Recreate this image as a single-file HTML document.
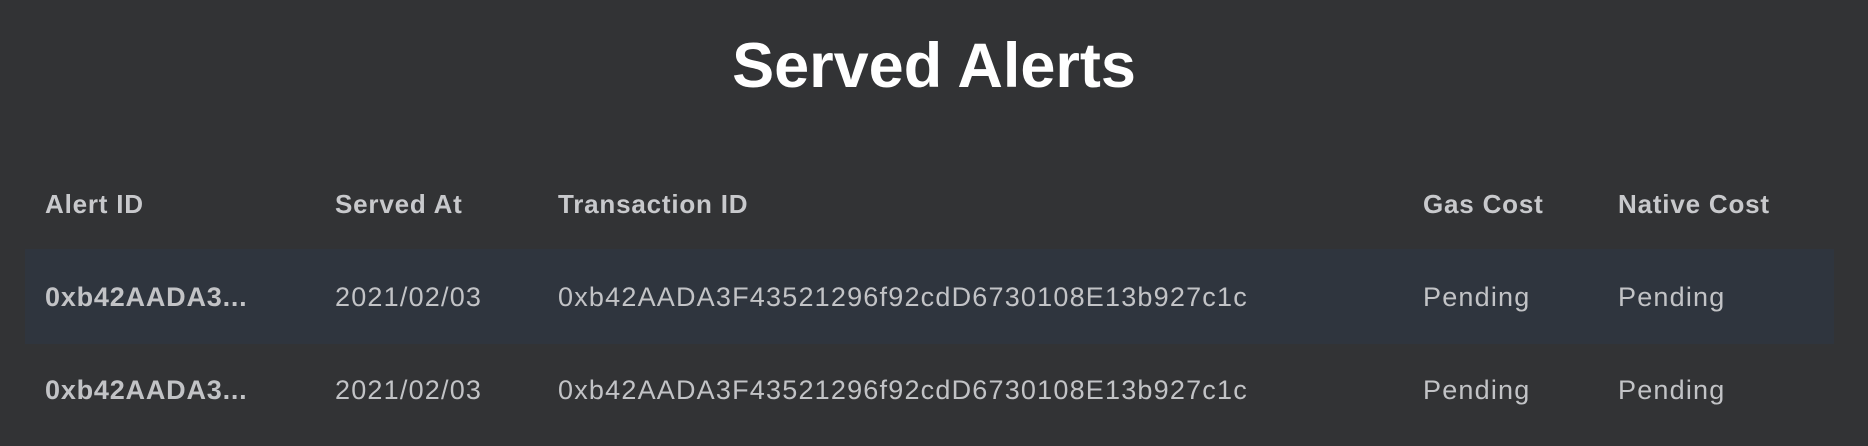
<!DOCTYPE html>
<html><head><meta charset="utf-8"><style>
html,body{margin:0;padding:0;width:1868px;height:446px;background:#323335;overflow:hidden;font-family:"Liberation Sans",Arial,sans-serif}
.t{position:absolute;left:0;width:1868px;text-align:center;top:26px;font-size:63px;font-weight:bold;color:#fff;line-height:80px}
.band{position:absolute;left:25px;top:249px;width:1809px;height:95px;background:#2f353e}
.c{position:absolute;white-space:nowrap;line-height:30px}
.h{font-weight:bold;font-size:26px;color:#c8c9cc;letter-spacing:0.8px;top:189px}
.d{font-size:27px;color:#c2c3c6;letter-spacing:1.2px}
.r1{top:282px}.r2{top:375px}
.b{font-weight:bold;letter-spacing:0.8px}
</style></head><body>
<div class="t">Served Alerts</div>
<div class="band"></div>
<div class="c h" style="left:45px">Alert ID</div>
<div class="c h" style="left:335px">Served At</div>
<div class="c h" style="left:558px">Transaction ID</div>
<div class="c h" style="left:1423px">Gas Cost</div>
<div class="c h" style="left:1618px">Native Cost</div>

<div class="c d b r1" style="left:45px">0xb42AADA3...</div>
<div class="c d r1" style="left:335px">2021/02/03</div>
<div class="c d r1" style="left:558px">0xb42AADA3F43521296f92cdD6730108E13b927c1c</div>
<div class="c d r1" style="left:1423px">Pending</div>
<div class="c d r1" style="left:1618px">Pending</div>

<div class="c d b r2" style="left:45px">0xb42AADA3...</div>
<div class="c d r2" style="left:335px">2021/02/03</div>
<div class="c d r2" style="left:558px">0xb42AADA3F43521296f92cdD6730108E13b927c1c</div>
<div class="c d r2" style="left:1423px">Pending</div>
<div class="c d r2" style="left:1618px">Pending</div>
</body></html>
